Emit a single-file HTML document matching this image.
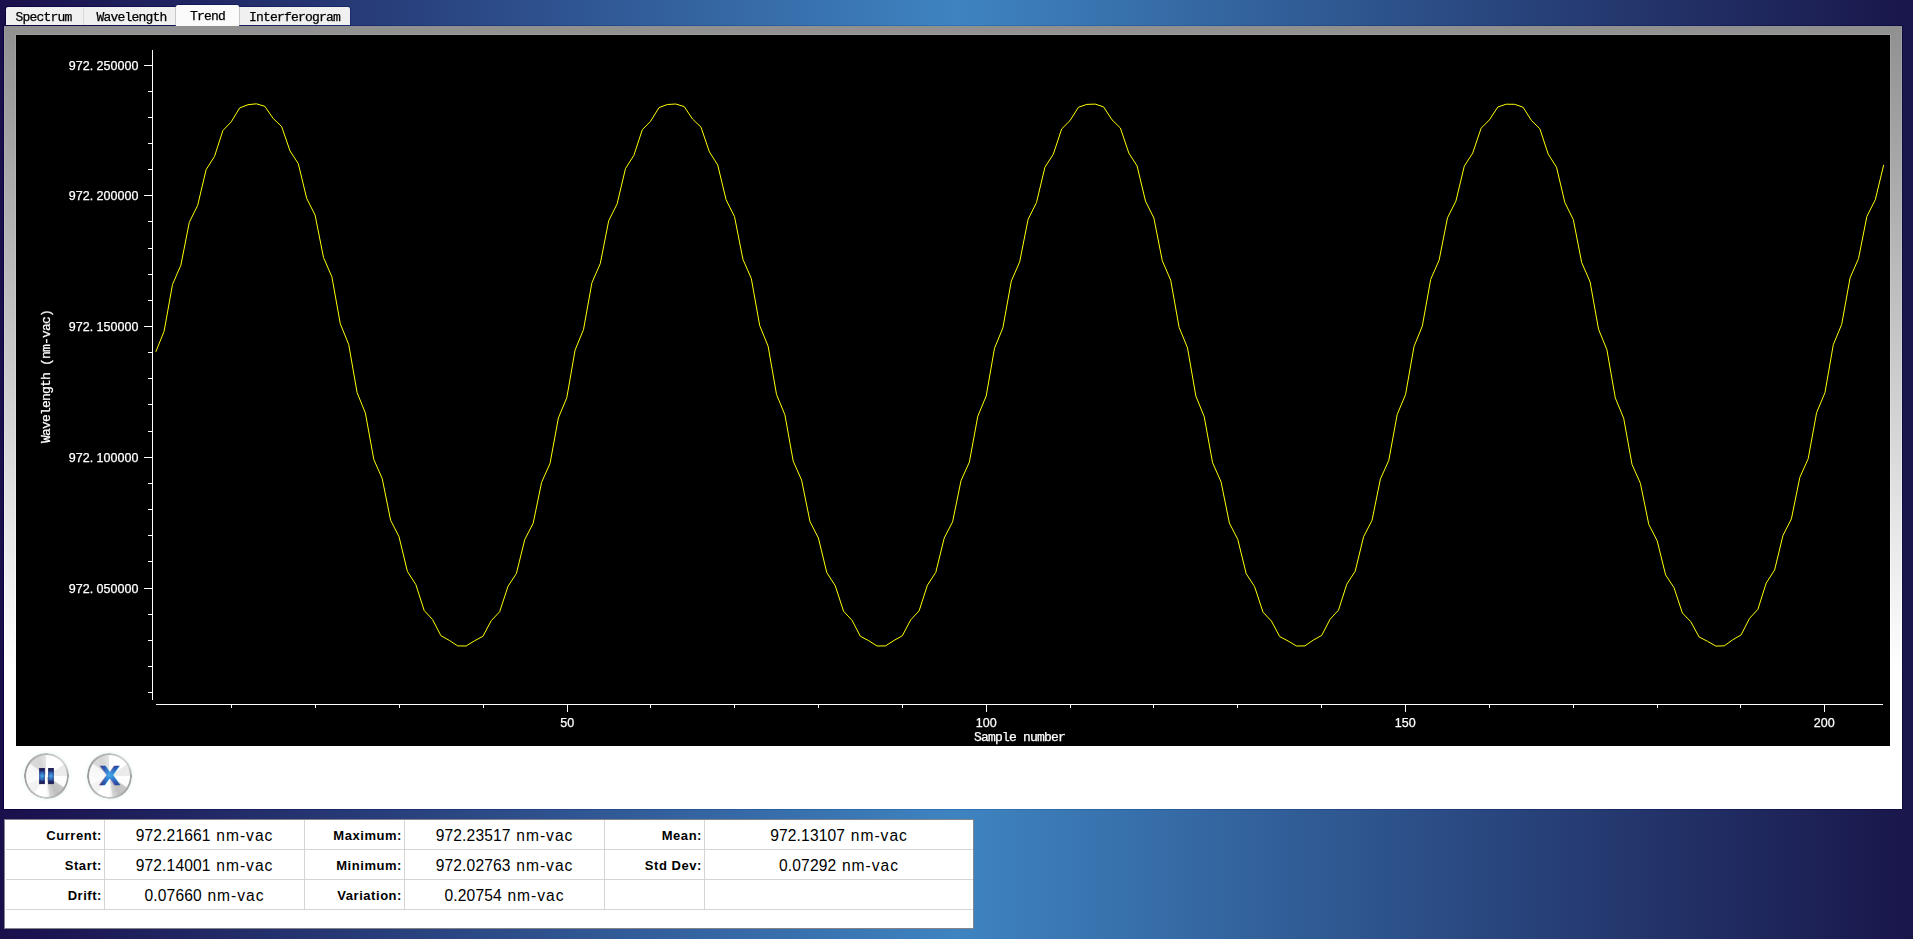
<!DOCTYPE html>
<html lang="en"><head><meta charset="utf-8"><title>Trend</title>
<style>
html,body{margin:0;padding:0}
body{width:1913px;height:939px;overflow:hidden;position:relative;
 background:linear-gradient(to right,#190f4b 0px,#3e84c1 956px,#19164a 1913px);
 font-family:"Liberation Sans",sans-serif}
.tabs{will-change:transform;position:absolute;left:0;top:0;height:26px;width:400px;font-family:"Liberation Mono",monospace;font-size:13px;letter-spacing:-0.8px;color:#000;-webkit-text-stroke:.25px #000}
.ol{position:absolute;background:linear-gradient(to right,#0c0040 0px,#3076b6 956px,#0d0840 1913px) no-repeat;background-size:1913px 939px}
.strip{position:absolute;left:6px;top:7px;width:344px;height:18px;background:#f0f0f0;border-radius:2px 2px 0 0}
.tab{position:absolute;top:7px;height:18px;text-align:center;line-height:21px;white-space:nowrap}
.tab.sel{top:5px;height:21px;background:#fbfbfb;line-height:23px;border-radius:2px 2px 0 0;box-shadow:-1px 0 0 0 rgba(120,120,140,.35),1px 0 0 0 rgba(120,120,140,.35)}
.sep{position:absolute;top:8px;width:1px;height:17px;background:#d8d8d8}
.frame{position:absolute;left:4px;top:26px;width:1898px;height:783px;
 background:linear-gradient(to bottom,#9b9b9b 0px,#ffffff 580px)}
.frame::before{content:"";position:absolute;left:1px;right:1px;top:0;bottom:0;
 background:linear-gradient(to bottom,#909090 0px,#ffffff 644px)}
.pb{position:absolute;left:11px;top:8px;width:1876px;height:713px;
 background:linear-gradient(to bottom,#9b9b9b 0px,#ffffff 580px) no-repeat 0 -8px;background-size:100% 783px}
.plot{position:absolute;left:12px;top:9px;display:block;will-change:transform}
.btn{position:absolute;box-sizing:border-box;border-radius:50%;
 background:conic-gradient(from 0deg,#fefefe 0deg,#ffffff 55deg,#eaeaea 58deg,#ececec 89deg,#ffffff 91deg,#fbfbfb 121deg,#c8c8c8 125deg,#bfbfbf 150deg,#d6d6d6 170deg,#efefef 173deg,#ffffff 182deg,#ffffff 214deg,#f1f1f1 218deg,#f3f3f3 245deg,#fcfcfc 248deg,#f6f6f6 305deg,#dadada 309deg,#d5d5d5 335deg,#e4e4e4 357deg,#fefefe 360deg);
 box-shadow:0 0 3px 1px rgba(190,235,240,.28)}
.btn::after{content:"";position:absolute;left:0;top:0;right:0;bottom:0;border-radius:50%;
 background:conic-gradient(from 0deg,#bababa 0deg,#d2d2d2 40deg,#cccccc 65deg,#a2a2a2 90deg,#a2a2a2 115deg,#b0b0b0 150deg,#c6c6c6 185deg,#b6b6b6 225deg,#9c9c9c 265deg,#9c9c9c 295deg,#b0b0b0 330deg,#bababa 360deg);
 -webkit-mask:radial-gradient(ellipse closest-side,rgba(0,0,0,0) calc(100% - 2.5px),#000 calc(100% - 1.6px),#000 calc(100% - .5px),rgba(0,0,0,.55) 100%);
 mask:radial-gradient(ellipse closest-side,rgba(0,0,0,0) calc(100% - 2.5px),#000 calc(100% - 1.6px),#000 calc(100% - .5px),rgba(0,0,0,.55) 100%)}
.btn svg{position:absolute;left:0;top:0}
.tbl{position:absolute;left:4px;top:819px;width:968px;height:108px;background:#fff;border:1px solid #82838b}
.tbl .ln{position:absolute;background:#d5d5d5;display:block}
.c{position:absolute;height:29px;line-height:31px;white-space:nowrap;color:#000}
.l{font-weight:bold;font-size:13px;text-align:right;letter-spacing:.55px}
.v{font-size:15.6px;text-align:center;word-spacing:1.2px}
.v .n{letter-spacing:.15px}
.v .u{letter-spacing:1px}
</style></head><body>
<div class="ol" style="left:3px;top:25px;width:1900px;height:785px;background-position:-3px -25px"></div>
<div class="ol" style="left:5px;top:6px;width:346px;height:20px;background-position:-5px -6px;border-radius:3px 3px 0 0"></div>
<div class="ol" style="left:175px;top:4px;width:65px;height:22px;background-position:-175px -4px;border-radius:3px 3px 0 0"></div>
<div class="tabs">
<div class="strip"></div><div class="sep" style="left:83px"></div>
<div class="tab" style="left:5px;width:77px">Spectrum</div>
<div class="tab" style="left:85px;width:93px">Wavelength</div>
<div class="tab sel" style="left:176px;width:63px">Trend</div>
<div class="tab" style="left:239px;width:111px">Interferogram</div>
</div>
<div class="frame">
<div class="pb"></div>
<svg class="plot" width="1874" height="711" viewBox="0 0 1874 711">
<rect width="1874" height="711" fill="#000"/>
<g fill="#fff" shape-rendering="crispEdges">
<rect x="136" y="15" width="1" height="650"/>
<rect x="140" y="669" width="1727" height="1"/>
<rect x="128" y="30" width="8" height="1"/>
<rect x="132" y="56" width="4" height="1"/>
<rect x="132" y="82" width="4" height="1"/>
<rect x="132" y="108" width="4" height="1"/>
<rect x="132" y="134" width="4" height="1"/>
<rect x="128" y="160" width="8" height="1"/>
<rect x="132" y="186" width="4" height="1"/>
<rect x="132" y="213" width="4" height="1"/>
<rect x="132" y="239" width="4" height="1"/>
<rect x="132" y="265" width="4" height="1"/>
<rect x="128" y="291" width="8" height="1"/>
<rect x="132" y="317" width="4" height="1"/>
<rect x="132" y="343" width="4" height="1"/>
<rect x="132" y="369" width="4" height="1"/>
<rect x="132" y="396" width="4" height="1"/>
<rect x="128" y="422" width="8" height="1"/>
<rect x="132" y="448" width="4" height="1"/>
<rect x="132" y="474" width="4" height="1"/>
<rect x="132" y="500" width="4" height="1"/>
<rect x="132" y="526" width="4" height="1"/>
<rect x="128" y="553" width="8" height="1"/>
<rect x="132" y="579" width="4" height="1"/>
<rect x="132" y="605" width="4" height="1"/>
<rect x="132" y="631" width="4" height="1"/>
<rect x="132" y="657" width="4" height="1"/>
<rect x="215" y="669" width="1" height="4"/>
<rect x="299" y="669" width="1" height="4"/>
<rect x="383" y="669" width="1" height="4"/>
<rect x="467" y="669" width="1" height="4"/>
<rect x="551" y="669" width="1" height="8"/>
<rect x="634" y="669" width="1" height="4"/>
<rect x="718" y="669" width="1" height="4"/>
<rect x="802" y="669" width="1" height="4"/>
<rect x="886" y="669" width="1" height="4"/>
<rect x="970" y="669" width="1" height="8"/>
<rect x="1054" y="669" width="1" height="4"/>
<rect x="1137" y="669" width="1" height="4"/>
<rect x="1221" y="669" width="1" height="4"/>
<rect x="1305" y="669" width="1" height="4"/>
<rect x="1389" y="669" width="1" height="8"/>
<rect x="1473" y="669" width="1" height="4"/>
<rect x="1557" y="669" width="1" height="4"/>
<rect x="1641" y="669" width="1" height="4"/>
<rect x="1724" y="669" width="1" height="4"/>
<rect x="1808" y="669" width="1" height="8"/>
</g>
<g fill="#fff" stroke="#fff" stroke-width=".25" font-family="'Liberation Sans', sans-serif" font-size="12.5" letter-spacing="0.05">
<text x="122.6" y="35.0" text-anchor="end">972.<tspan dx="3.4">250000</tspan></text>
<text x="122.6" y="165.0" text-anchor="end">972.<tspan dx="3.4">200000</tspan></text>
<text x="122.6" y="296.0" text-anchor="end">972.<tspan dx="3.4">150000</tspan></text>
<text x="122.6" y="427.0" text-anchor="end">972.<tspan dx="3.4">100000</tspan></text>
<text x="122.6" y="558.0" text-anchor="end">972.<tspan dx="3.4">050000</tspan></text>
<text x="551.3" y="692.2" text-anchor="middle">50</text>
<text x="970.3" y="692.2" text-anchor="middle">100</text>
<text x="1389.3" y="692.2" text-anchor="middle">150</text>
<text x="1808.3" y="692.2" text-anchor="middle">200</text>
</g>
<g fill="#fff" stroke="#fff" stroke-width=".25" font-family="'Liberation Mono', monospace" font-size="13" letter-spacing="-0.8">
<text x="1003.6" y="705.8" text-anchor="middle">Sample number</text>
<text transform="translate(34.2,341.5) rotate(-90)" text-anchor="middle">Wavelength (nm-vac)</text>
</g>
<polyline fill="none" stroke="#ffff00" stroke-width="1" stroke-linejoin="round" points="139.8,316.8 148.1,296.3 156.5,249.5 164.9,230.1 173.3,187.3 181.7,170.3 190.1,134.7 198.5,121.4 206.9,95.5 215.2,86.9 223.6,73.0 232.0,69.7 240.4,68.8 248.8,71.3 257.2,83.5 265.6,91.4 274.0,115.9 282.3,128.7 290.7,163.4 299.1,180.1 307.5,222.5 315.9,241.9 324.3,288.8 332.7,309.4 341.1,357.6 349.4,378.1 357.8,424.5 366.2,443.5 374.6,485.2 383.0,501.7 391.4,536.4 399.8,549.5 408.2,575.5 416.6,584.6 424.9,600.7 433.3,605.4 441.7,610.9 450.1,611.0 458.5,605.8 466.9,601.3 475.3,585.6 483.7,576.7 492.0,551.3 500.4,538.5 508.8,504.4 517.2,488.2 525.6,447.3 534.0,428.6 542.4,382.9 550.8,362.7 559.1,315.0 567.5,294.6 575.9,247.8 584.3,228.5 592.7,185.8 601.1,168.9 609.5,133.5 617.9,120.3 626.3,94.7 634.6,86.2 643.0,72.6 651.4,69.5 659.8,69.0 668.2,71.6 676.6,84.1 685.0,92.2 693.4,116.9 701.7,129.9 710.1,164.8 718.5,181.6 726.9,224.2 735.3,243.5 743.7,290.6 752.1,311.2 760.5,359.4 768.9,379.8 777.2,426.1 785.6,445.1 794.0,486.6 802.4,503.0 810.8,537.6 819.2,550.6 827.6,576.3 836.0,585.3 844.3,601.2 852.7,605.7 861.1,611.0 869.5,610.9 877.9,605.5 886.3,600.8 894.7,584.9 903.1,575.9 911.4,550.2 919.8,537.3 928.2,503.1 936.6,486.8 945.0,445.7 953.4,427.0 961.8,381.2 970.2,361.0 978.5,313.3 986.9,292.8 995.3,246.1 1003.7,226.8 1012.1,184.3 1020.5,167.5 1028.9,132.3 1037.3,119.2 1045.7,93.9 1054.0,85.6 1062.4,72.3 1070.8,69.4 1079.2,69.1 1087.6,71.9 1096.0,84.8 1104.4,93.0 1112.8,118.0 1121.1,131.0 1129.5,166.2 1137.9,183.1 1146.3,225.8 1154.7,245.2 1163.1,292.3 1171.5,312.9 1179.9,361.2 1188.2,381.6 1196.6,427.8 1205.0,446.7 1213.4,488.1 1221.8,504.4 1230.2,538.7 1238.6,551.6 1247.0,577.2 1255.4,586.0 1263.7,601.6 1272.1,606.0 1280.5,611.0 1288.9,610.9 1297.3,605.1 1305.7,600.4 1314.1,584.2 1322.5,575.1 1330.8,549.2 1339.2,536.2 1347.6,501.7 1356.0,485.4 1364.4,444.1 1372.8,425.3 1381.2,379.5 1389.6,359.3 1398.0,311.5 1406.3,291.1 1414.7,244.4 1423.1,225.2 1431.5,182.8 1439.9,166.1 1448.3,131.1 1456.7,118.1 1465.1,93.2 1473.4,84.9 1481.8,72.0 1490.2,69.2 1498.6,69.3 1507.0,72.2 1515.4,85.4 1523.8,93.7 1532.2,119.1 1540.5,132.2 1548.9,167.6 1557.3,184.6 1565.7,227.5 1574.1,246.9 1582.5,294.1 1590.9,314.7 1599.3,362.9 1607.7,383.3 1616.0,429.4 1624.4,448.3 1632.8,489.5 1641.2,505.8 1649.6,539.9 1658.0,552.7 1666.4,578.0 1674.8,586.7 1683.1,602.0 1691.5,606.3 1699.9,611.1 1708.3,610.8 1716.7,604.8 1725.1,599.9 1733.5,583.4 1741.9,574.3 1750.2,548.1 1758.6,535.0 1767.0,500.3 1775.4,483.9 1783.8,442.5 1792.2,423.7 1800.6,377.7 1809.0,357.5 1817.3,309.7 1825.7,289.4 1834.1,242.8 1842.5,223.6 1850.9,181.4 1859.3,164.7 1867.7,129.9"/>
</svg>
<div class="btn" style="left:19.7px;top:726.8px;width:45.4px;height:46.2px"><svg width="45.4" height="46.2" viewBox="23.7 752.8 45.4 46.2"><defs><linearGradient id="pg" x1="0" y1="0" x2="0" y2="1"><stop offset="0" stop-color="#23265c"/><stop offset=".17" stop-color="#23265c"/><stop offset=".24" stop-color="#2a56b0"/><stop offset=".5" stop-color="#48a6e6"/><stop offset=".76" stop-color="#2a56b0"/><stop offset=".83" stop-color="#23265c"/><stop offset="1" stop-color="#23265c"/></linearGradient><linearGradient id="ph" x1="0" y1="0" x2="1" y2="0"><stop offset="0" stop-color="#141a5a" stop-opacity=".6"/><stop offset=".35" stop-color="#141a5a" stop-opacity="0"/><stop offset=".65" stop-color="#141a5a" stop-opacity="0"/><stop offset="1" stop-color="#141a5a" stop-opacity=".6"/></linearGradient><radialGradient id="xg" gradientUnits="userSpaceOnUse" cx="0" cy="-10.2" r="14"><stop offset="0" stop-color="#46aae6"/><stop offset=".3" stop-color="#3682d2"/><stop offset=".62" stop-color="#2d58ae"/><stop offset="1" stop-color="#283c90"/></radialGradient></defs><rect x="38.9" y="767.8" width="5.6" height="16.1" fill="url(#pg)"/><rect x="38.9" y="767.8" width="5.6" height="16.1" fill="url(#ph)"/><rect x="47.9" y="767.8" width="5.6" height="16.1" fill="url(#pg)"/><rect x="47.9" y="767.8" width="5.6" height="16.1" fill="url(#ph)"/></svg></div>
<div class="btn" style="left:82.7px;top:727.4px;width:45.0px;height:45.2px"><svg width="45.0" height="45.2" viewBox="86.7 753.4 45.0 45.2"><text transform="translate(109.3 785.8) scale(1.09 1)" x="0" y="0" text-anchor="middle" font-family="'Liberation Sans',sans-serif" font-weight="bold" font-size="27.8" fill="url(#xg)" stroke="url(#xg)" stroke-width=".7" stroke-linejoin="miter">X</text></svg></div>
</div>
<div class="tbl">
<span class="ln" style="left:1px;top:29px;width:967px;height:1px"></span>
<span class="ln" style="left:1px;top:59px;width:967px;height:1px"></span>
<span class="ln" style="left:1px;top:89px;width:967px;height:1px"></span>
<span class="ln" style="left:99px;top:0;width:1px;height:89px"></span>
<span class="ln" style="left:299px;top:0;width:1px;height:89px"></span>
<span class="ln" style="left:399px;top:0;width:1px;height:89px"></span>
<span class="ln" style="left:599px;top:0;width:1px;height:89px"></span>
<span class="ln" style="left:699px;top:0;width:1px;height:89px"></span>
<div class="c l" style="left:0px;top:0px;width:97px">Current:</div>
<div class="c v" style="left:100px;top:0px;width:199px"><span class="n">972.21661</span> <span class="u">nm-vac</span></div>
<div class="c l" style="left:300px;top:0px;width:97px">Maximum:</div>
<div class="c v" style="left:400px;top:0px;width:199px"><span class="n">972.23517</span> <span class="u">nm-vac</span></div>
<div class="c l" style="left:600px;top:0px;width:97px">Mean:</div>
<div class="c v" style="left:700px;top:0px;width:268px"><span class="n">972.13107</span> <span class="u">nm-vac</span></div>
<div class="c l" style="left:0px;top:30px;width:97px">Start:</div>
<div class="c v" style="left:100px;top:30px;width:199px"><span class="n">972.14001</span> <span class="u">nm-vac</span></div>
<div class="c l" style="left:300px;top:30px;width:97px">Minimum:</div>
<div class="c v" style="left:400px;top:30px;width:199px"><span class="n">972.02763</span> <span class="u">nm-vac</span></div>
<div class="c l" style="left:600px;top:30px;width:97px">Std Dev:</div>
<div class="c v" style="left:700px;top:30px;width:268px"><span class="n">0.07292</span> <span class="u">nm-vac</span></div>
<div class="c l" style="left:0px;top:60px;width:97px">Drift:</div>
<div class="c v" style="left:100px;top:60px;width:199px"><span class="n">0.07660</span> <span class="u">nm-vac</span></div>
<div class="c l" style="left:300px;top:60px;width:97px">Variation:</div>
<div class="c v" style="left:400px;top:60px;width:199px"><span class="n">0.20754</span> <span class="u">nm-vac</span></div>
</div>
</body></html>
